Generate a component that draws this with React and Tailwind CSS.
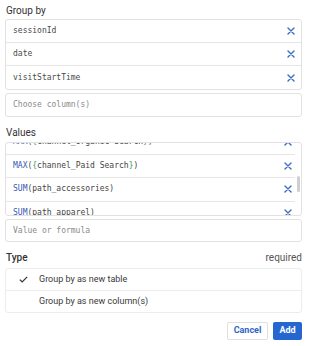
import React from "react";

const mono = { fontFamily: '"DejaVu Sans Mono", "Liberation Mono", monospace' };

function XIcon() {
	return (
		<svg width="8" height="8" viewBox="0 0 8 8" className="shrink-0">
			<path d="M1 1L7 7M7 1L1 7" stroke="#3a6cc6" strokeWidth="1.4" strokeLinecap="round" />
		</svg>
	);
}

function Row({ children, last }) {
	return (
		<div
			className={`h-[23px] flex items-center justify-between pl-[7px] pr-[6px] ${
				last ? "" : "border-b border-[#e6e6e6]"
			}`}>
			<span className="text-[8px] text-[#4a4a4a]" style={mono}>
				{children}
			</span>
			<XIcon />
		</div>
	);
}

function Formula({ fn, arg, braces }) {
	return (
		<>
			<span className="text-[#3557b8]">{fn}</span>
			<span className="text-[#444]">(</span>
			{braces && <span className="text-[#3a9a5a]">{"{"}</span>}
			<span className="text-[#444]">{arg}</span>
			{braces && <span className="text-[#3a9a5a]">{"}"}</span>}
			<span className="text-[#444]">)</span>
		</>
	);
}

export default function App() {
	const values = [
		{ fn: "MAX", arg: "channel_Organic Search", braces: true },
		{ fn: "MAX", arg: "channel_Paid Search", braces: true },
		{ fn: "SUM", arg: "path_accessories" },
		{ fn: "SUM", arg: "path_apparel" },
	];

	return (
		<div
			className="w-[309px] h-[346px] bg-white px-[5px] pt-[3px] text-[#333] overflow-hidden"
			style={{ fontFamily: 'Roboto, "Noto Sans", sans-serif' }}>
			<div className="h-[15px] flex items-center text-[10px] pl-[1px]">Group by</div>
			<div className="mt-[1px] w-[297px] border border-[#e2e2e2] rounded-[3px]">
				<Row>sessionId</Row>
				<Row>date</Row>
				<Row last>visitStartTime</Row>
			</div>
			<div className="mt-[3px] w-[297px] h-[24px] border border-[#e2e2e2] rounded-[3px] flex items-center pl-[7px]">
				<span className="text-[8px] text-[#8a8a8a]" style={mono}>
					Choose column(s)
				</span>
			</div>

			<div className="mt-[8px] h-[15px] flex items-center text-[10px] pl-[1px]">Values</div>
			<div className="relative mt-[2px] w-[297px] h-[74px] border border-[#e2e2e2] rounded-[3px] overflow-hidden">
				<div className="-mt-[12px] pr-[6px]">
					{values.map((v, i) => (
						<div
							key={i}
							className="h-[23.5px] flex items-center justify-between pl-[7px] pr-[3px] border-b border-[#e6e6e6]">
							<span className="text-[8px]" style={mono}>
								<Formula {...v} />
							</span>
							<XIcon />
						</div>
					))}
				</div>
				<div className="absolute right-[1px] top-[33px] w-[3px] h-[16px] rounded-full bg-[#cfcfcf]" />
			</div>
			<div className="mt-[3px] w-[297px] h-[23px] border border-[#e2e2e2] rounded-[3px] flex items-center pl-[7px]">
				<span className="text-[8px] text-[#8a8a8a]" style={mono}>
					Value or formula
				</span>
			</div>

			<div className="mt-[8px] h-[14px] flex items-center justify-between text-[10px] pl-[1px] w-[297px]">
				<span className="font-medium">Type</span>
				<span className="text-[#555]">required</span>
			</div>
			<div className="mt-[4px] w-[297px] border border-[#ececec] rounded-[3px] text-[9px] text-[#3a3a3a]">
				<div className="h-[22px] flex items-center border-b border-[#ececec]">
					<span className="w-[33px] flex pl-[13px]">
						<svg width="9" height="7" viewBox="0 0 9 7">
							<path d="M0.8 3.6L3.2 6L8.2 0.8" fill="none" stroke="#333" strokeWidth="1.2" />
						</svg>
					</span>
					<span>Group by as new table</span>
				</div>
				<div className="h-[21px] flex items-center">
					<span className="w-[33px]" />
					<span>Group by as new column(s)</span>
				</div>
			</div>

			<div className="mt-[9px] w-[297px] flex justify-end gap-[5px]">
				<button className="h-[18px] w-[41px] border border-[#e0e0e0] rounded-[2px] bg-white text-[9px] font-bold text-[#2f66c6]">
					Cancel
				</button>
				<button className="h-[18px] w-[29px] rounded-[2px] bg-[#2566d0] text-[9px] font-bold text-white">
					Add
				</button>
			</div>
		</div>
	);
}
